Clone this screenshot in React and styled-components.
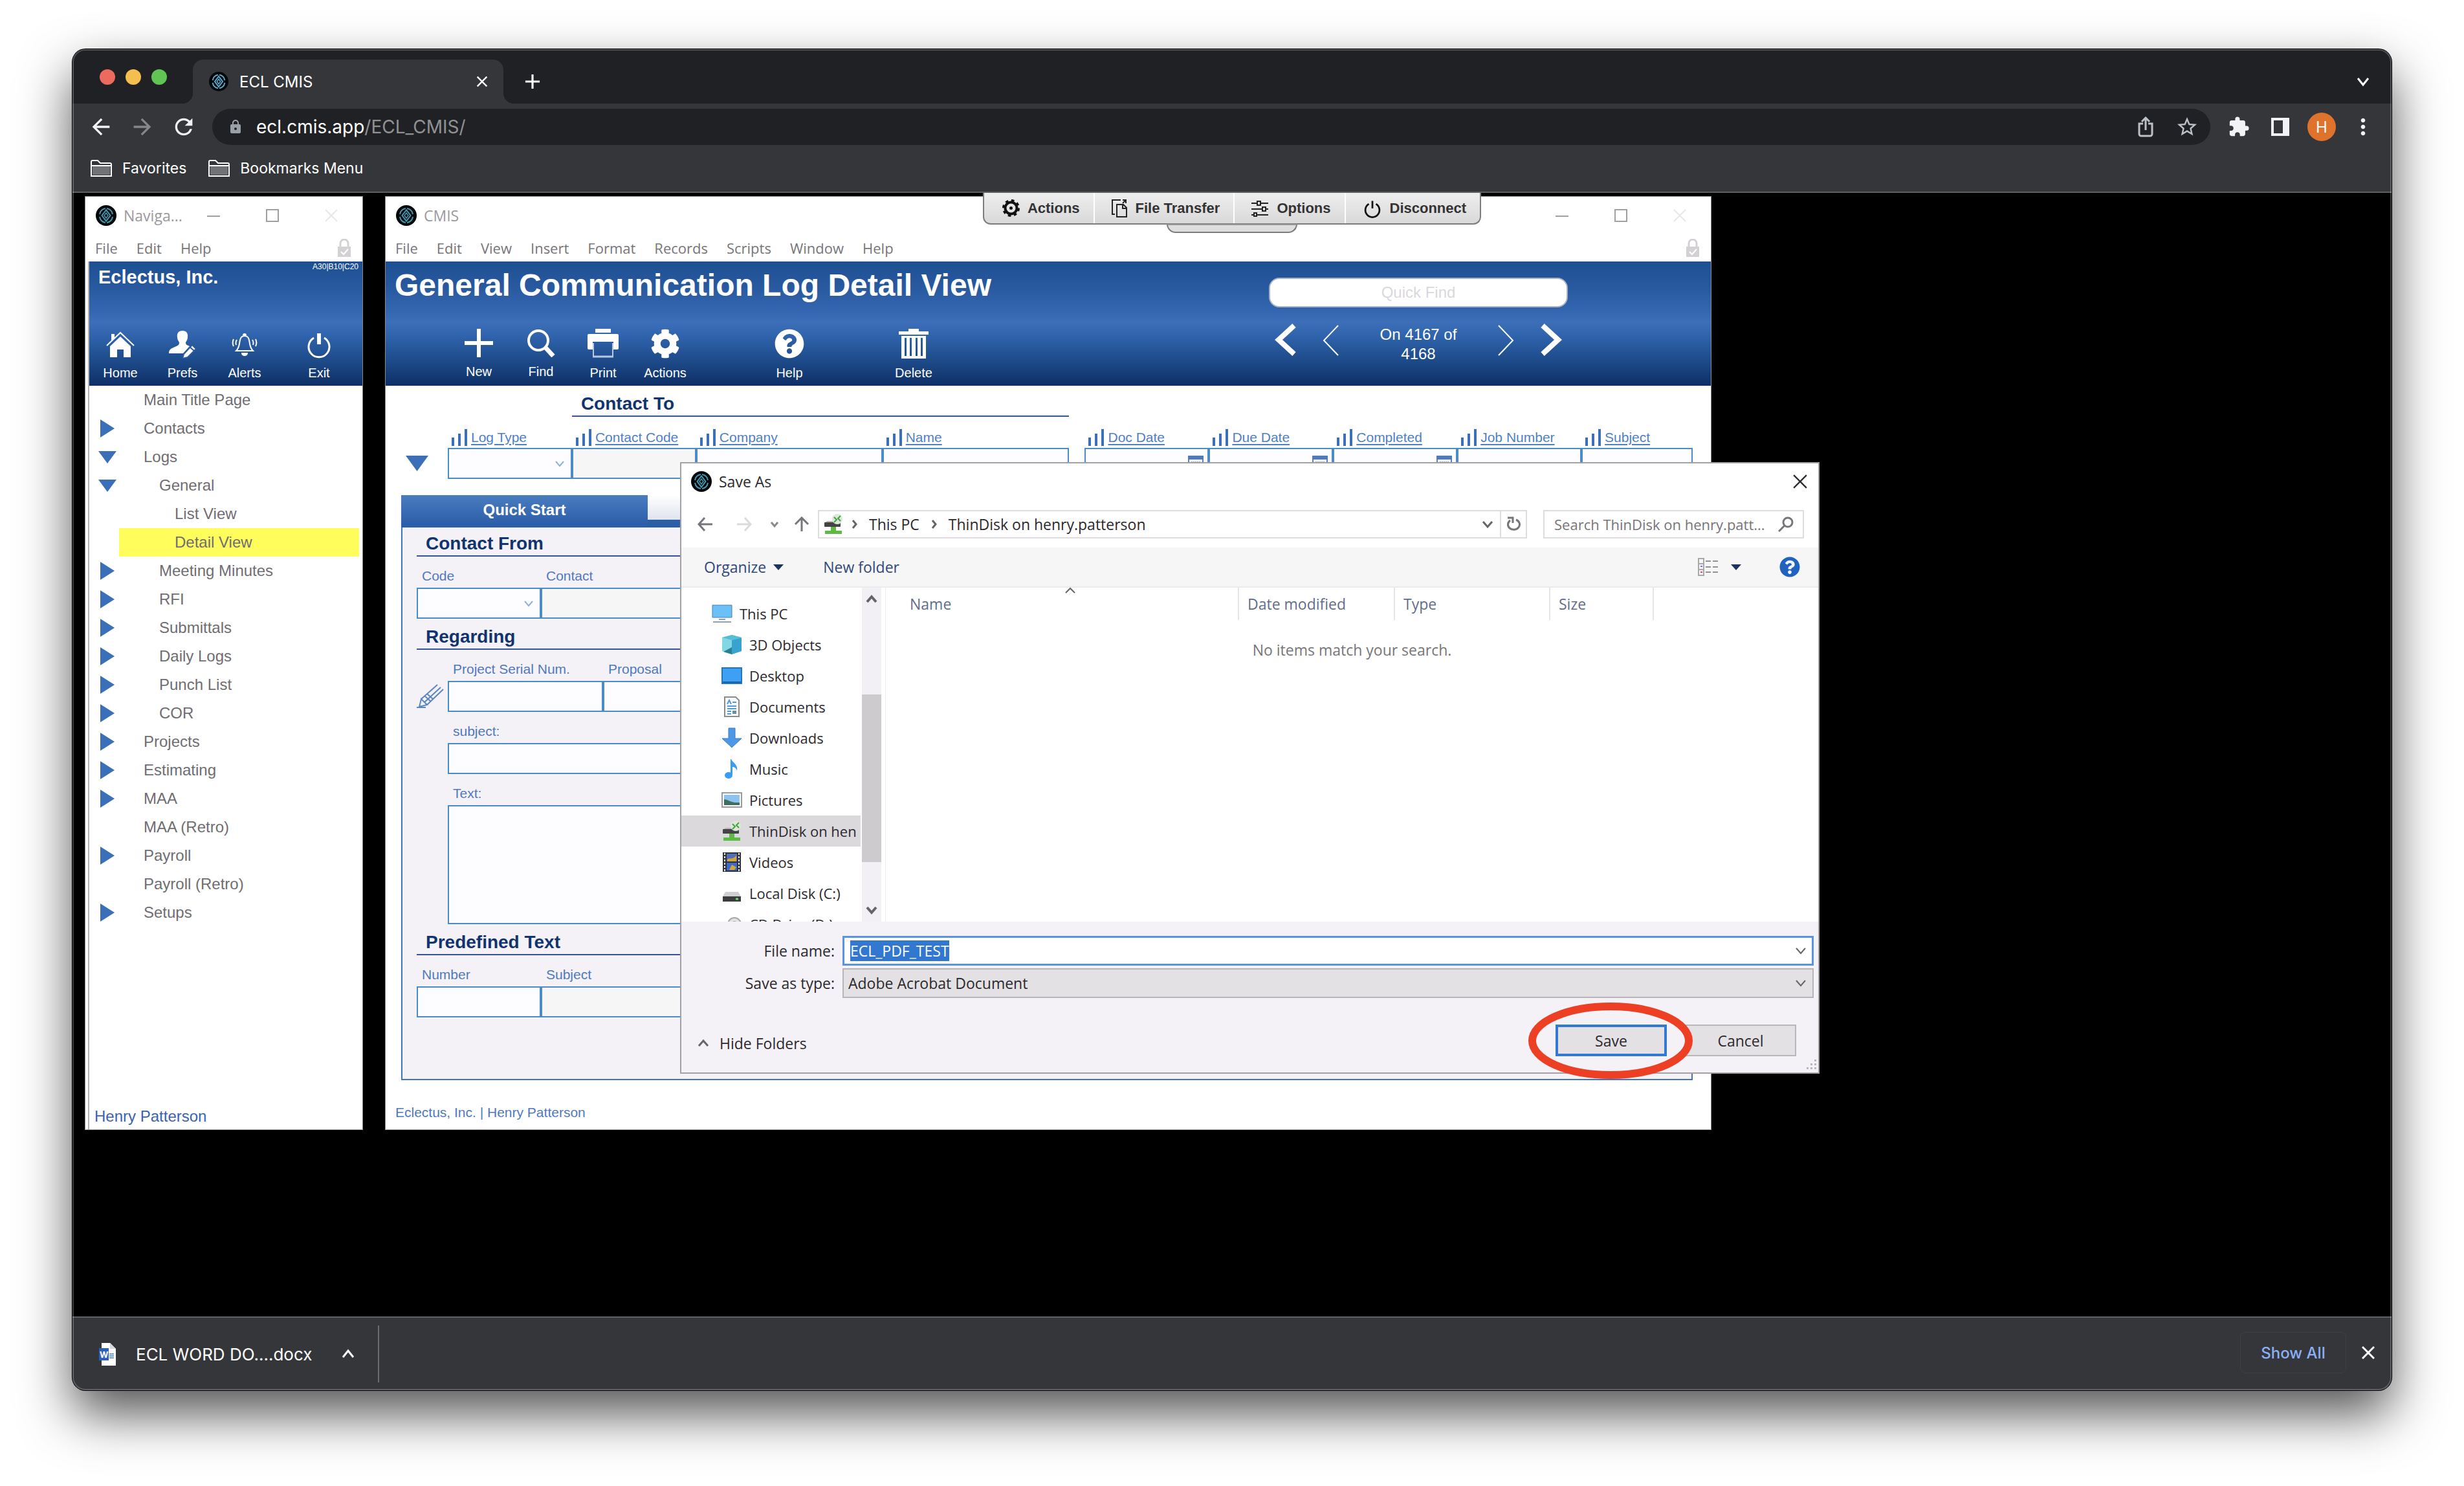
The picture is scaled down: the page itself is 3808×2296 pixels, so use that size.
import React, { useEffect, useRef } from 'react'
import styled, { createGlobalStyle, css } from 'styled-components'
import {
  MdAdd,
  MdArrowBack,
  MdArrowForward,
  MdClose,
  MdExtension,
  MdLock,
  MdMoreVert,
  MdRefresh,
  MdStarBorder,
} from 'react-icons/md'
import { FaCog, FaQuestionCircle } from 'react-icons/fa'

const ui = "Inter, 'Liberation Sans', sans-serif"
const win = "'Open Sans', 'Noto Sans', sans-serif"
const arial = "'Liberation Sans', Arial, sans-serif"

const GlobalStyle = createGlobalStyle`
  * {
    box-sizing: border-box;
  }

  body {
    margin: 0;
    background: #ffffff;
    font-family: ${arial};
  }

  button, input, select, textarea {
    margin: 0;
    padding: 0;
    border: 0;
    border-radius: 0;
    background: none;
    color: inherit;
    font: inherit;
    outline: none;
  }

  a {
    color: inherit;
    text-decoration: none;
  }

  svg {
    display: block;
    flex: none;
  }
`

/* ---------- browser ---------- */

const Page = styled.div`
  min-height: 100vh;
  padding: 76px 112px 148px;
  display: flex;
`

const Browser = styled.div`
  position: relative;
  flex: 1;
  min-width: 0;
  display: flex;
  flex-direction: column;
  border-radius: 20px;
  overflow: hidden;
  background: #35363a;
  color: #ffffff;
  font-family: ${ui};
  box-shadow: 0 0 0 1px #000000, 0 36px 80px rgba(0, 0, 0, 0.68);

  &::after {
    content: '';
    position: absolute;
    inset: 0;
    border: 2px solid rgba(255, 255, 255, 0.22);
    border-radius: 20px;
    pointer-events: none;
  }
`

const TabStrip = styled.div`
  height: 84px;
  padding: 0 35px 0 42px;
  display: flex;
  align-items: flex-end;
  background: #202124;
`

const Lights = styled.div`
  height: 82px;
  display: flex;
  align-items: center;
  gap: 16px;
  margin-right: 40px;
`

const Light = styled.span`
  width: 24px;
  height: 24px;
  border-radius: 50%;
  background: ${(props) => props.$color};
`

const Tab = styled.div`
  position: relative;
  width: 480px;
  height: 68px;
  padding: 0 19px 0 25px;
  display: flex;
  align-items: center;
  gap: 17px;
  border-radius: 16px 16px 0 0;
  background: #35363a;
  font-size: 24px;

  &::before,
  &::after {
    content: '';
    position: absolute;
    bottom: 0;
    width: 16px;
    height: 16px;
  }

  &::before {
    left: -16px;
    background: radial-gradient(circle at 0 0, transparent 16px, #35363a 16px);
  }

  &::after {
    right: -16px;
    background: radial-gradient(circle at 100% 0, transparent 16px, #35363a 16px);
  }
`

const TabTitle = styled.span`
  flex: 1;
`

const StripButton = styled.button`
  height: 68px;
  display: flex;
  align-items: center;
  justify-content: center;
  margin-left: ${(props) => (props.$end ? 'auto' : '26px')};
`

const Toolbar = styled.div`
  height: 72px;
  padding: 0 12px;
  display: flex;
  align-items: center;
`

const ToolButton = styled.button`
  width: 64px;
  height: 56px;
  display: flex;
  align-items: center;
  justify-content: center;
  color: ${(props) => props.$color || '#f1f3f4'};
`

const Omnibox = styled.div`
  flex: 1;
  height: 56px;
  margin: 0 12px;
  padding: 0 4px 0 24px;
  display: flex;
  align-items: center;
  border-radius: 28px;
  background: #202124;
`

const Url = styled.a`
  flex: 1;
  margin-left: 20px;
  font-size: 28px;
  color: #909194;

  span {
    color: #ffffff;
  }
`

const Avatar = styled.span`
  width: 44px;
  height: 44px;
  display: flex;
  align-items: center;
  justify-content: center;
  border-radius: 50%;
  background: #e0732b;
  color: #ffffff;
  font-size: 24px;
`

const Bookmarks = styled.div`
  height: 66px;
  padding: 0 28px 8px;
  display: flex;
  align-items: center;
  gap: 34px;
  border-bottom: 2px solid #5f6064;
`

const Bookmark = styled.a`
  display: flex;
  align-items: center;
  gap: 16px;
  font-size: 23px;
`

const Downloads = styled.div`
  height: 114px;
  padding: 0 26px 0 41px;
  display: flex;
  align-items: center;
  border-top: 2px solid #5f6064;
  font-size: 26px;
`

const DownloadItem = styled.button`
  height: 88px;
  padding-right: 37px;
  display: flex;
  align-items: center;
  gap: 31px;
  border-right: 2px solid #6b6c70;

  svg:last-child {
    margin-left: 16px;
  }
`

const DownloadActions = styled.div`
  margin-left: auto;
  padding-bottom: 4px;
  display: flex;
  align-items: center;
  gap: 24px;
`

const ShowAll = styled.button`
  width: 164px;
  height: 64px;
  border: 1px solid #3f4044;
  border-radius: 8px;
  color: #8ab0f5;
  font-size: 24px;
  font-weight: 500;
`

/* ---------- remote desktop ---------- */

const Desktop = styled.main`
  position: relative;
  flex: 1;
  padding: 5px 19px;
  background: #000000;
`

const Windows = styled.div`
  display: flex;
  align-items: stretch;
  gap: 34px;
`

const SessionBar = styled.div`
  position: absolute;
  top: 0;
  left: 0;
  right: 0;
  z-index: 1;
  display: flex;
  flex-direction: column;
  align-items: center;
`

const SessionButtons = styled.div`
  height: 49px;
  display: flex;
  border: 2px solid #7c7c7c;
  border-top: 0;
  border-radius: 0 0 12px 12px;
  background: linear-gradient(#eeeeee, #d9d9d9);
`

const SessionButton = styled.button`
  padding: 0 21px 0 28px;
  display: flex;
  align-items: center;
  gap: 12px;
  color: #333333;
  font-family: ${arial};
  font-size: 22px;
  font-weight: bold;

  & + & {
    padding-left: 26px;
    border-left: 2px solid #ffffff;
  }
`

const SessionHandle = styled.div`
  width: 202px;
  height: 14px;
  margin-top: -1px;
  border: 2px solid #7c7c7c;
  border-top-color: #999999;
  border-radius: 0 0 14px 14px;
  background: #dedede;
`

const Frame = styled.section`
  position: relative;
  flex: 0 ${(props) => (props.$shrink ? 1 : 0)} ${(props) => props.$width};
  display: flex;
  flex-direction: column;
  border: 1px solid #8a8a8a;
  background: #ffffff;
  font-family: ${arial};
  color: #6f6d72;
`

const TitleBar = styled.header`
  height: 58px;
  padding: 0 38px 0 16px;
  display: flex;
  align-items: center;
  gap: 11px;
  color: #9b999e;
  font-family: ${win};
  font-size: 23px;
`

const Caption = styled.span`
  flex: 1;
  white-space: nowrap;
`

const Controls = styled.div`
  display: flex;
  gap: ${(props) => props.$gap};
  color: #a19fa3;
`

const MenuBar = styled.nav`
  height: 42px;
  padding: 0 18px 0 15px;
  display: flex;
  align-items: center;
  gap: 29px;
  color: #77757a;
  font-family: ${win};
  font-size: 22px;

  svg {
    margin-left: auto;
  }
`

const blueBand = css`
  background: linear-gradient(
    #1e4f92 0%,
    #28599f 20%,
    #3365ae 38%,
    #3c6fb8 49%,
    #2f63ab 60%,
    #1f4d8d 78%,
    #0e2f66 100%
  );
  color: #ffffff;
`

const NavBody = styled.div`
  flex: 1;
  margin-left: 4px;
  display: flex;
  flex-direction: column;
  border-left: 2px solid #b4b2b6;
`

const NavHeader = styled.div`
  ${blueBand}
  height: 192px;
  padding: 2px 0 8px;
  display: flex;
  flex-direction: column;
  justify-content: space-between;
`

const CompanyRow = styled.div`
  padding: 0 6px 0 14px;
  display: flex;
  justify-content: space-between;
  font-size: 12px;
  line-height: 12px;
`

const Company = styled.strong`
  padding-top: 6px;
  font-size: 29px;
  line-height: 32px;
`

const NavActions = styled.div`
  display: grid;
  grid-template-columns: 96px 96px 96px 1fr;
`

const ActionButton = styled.button`
  display: flex;
  flex-direction: column;
  align-items: center;
  gap: 10px;
  grid-column: ${(props) => props.$slot || 'auto'};
  color: #ffffff;
  font-size: 20px;
  line-height: 24px;
`

const Tree = styled.ul`
  flex: 1;
  margin: 0;
  padding: 0 5px 0 0;
  list-style: none;
  font-size: 24px;
`

const TreeRow = styled.li`
  display: flex;
  height: 44px;
  line-height: 44px;
`

const TreeToggle = styled.span`
  width: 46px;
  padding-left: 10px;
  display: flex;
  align-items: center;
  justify-content: center;
`

const TreeLink = styled.a`
  flex: 1;
  padding-left: ${(props) => 38 + props.$level * 24}px;
  background: ${(props) => (props.$active ? '#fffd5c' : 'none')};
`

const NavUser = styled.footer`
  padding: 8px;
  color: #3a62b4;
  font-size: 24px;
  line-height: 24px;
`

/* ---------- CMIS form ---------- */

const FormHeader = styled.div`
  ${blueBand}
  height: 192px;
  padding-right: 221px;
  display: flex;
  justify-content: space-between;
`

const HeaderMain = styled.div`
  padding: 9px 0 8px;
  display: flex;
  flex-direction: column;
  justify-content: space-between;
`

const PageTitle = styled.h1`
  margin: 0;
  padding-left: 14px;
  font-size: 48px;
  line-height: 56px;
  white-space: nowrap;
`

const FormActions = styled.div`
  padding-left: 96px;
  display: grid;
  grid-template-columns: repeat(8, 96px);
`

const HeaderSide = styled.div`
  width: 462px;
  padding-top: 25px;
`

const QuickFind = styled.input`
  width: 100%;
  height: 46px;
  border: 2px solid #a9b2c2;
  border-radius: 16px;
  background: #ffffff;
  color: #333333;
  font-size: 24px;
  text-align: center;

  &::placeholder {
    color: #dad8dc;
    opacity: 1;
  }
`

const RecordNav = styled.div`
  margin-top: 27px;
  padding: 0 13px;
  display: flex;
  align-items: flex-start;
  gap: 42px;
  color: #ffffff;
`

const RecordCount = styled.p`
  flex: 1;
  margin: 0;
  font-size: 24px;
  line-height: 30px;
  text-align: center;
`

const FilterGrid = styled.div`
  padding: 12px 28px 0 0;
  display: grid;
  grid-template-columns: 96px 192fr 192fr 288fr 288fr 25fr 192fr 192fr 192fr 192fr 172fr;
  row-gap: 16px;
`

const SectionTitle = styled.h2`
  margin: 0;
  padding: 0 14px 2px;
  grid-column: ${(props) => props.$columns || 'auto'};
  border-bottom: 2px solid #34558f;
  color: #12346e;
  font-size: 28px;
  line-height: 32px;
`

const FieldCell = styled.div`
  display: flex;
  flex-direction: column;
  min-width: 0;
  grid-column-start: ${(props) => props.$start || 'auto'};
`

const SortLabel = styled.label`
  height: 32px;
  padding-left: 6px;
  display: flex;
  align-items: center;
  gap: 6px;
  color: #4f7fc5;
  font-size: 21px;
  text-decoration: underline;
  text-underline-offset: 3px;
  white-space: nowrap;
`

const FieldLabel = styled.label`
  margin-bottom: 4px;
  padding-left: 8px;
  color: #5079bd;
  font-size: 21px;
  line-height: 28px;
`

const boxed = css`
  width: 100%;
  height: 48px;
  border: 2px solid #4d8bc4;
  background: ${(props) => (props.$muted ? '#f6f6f6' : '#fdfcff')};
  appearance: none;
`

const TextBox = styled.input`
  ${boxed}
`

const TextArea = styled.textarea`
  ${boxed}
  display: block;
  height: 184px;
  resize: none;
`

const Picker = styled.select`
  ${boxed}
  grid-area: 1 / 1;
`

const DateBox = styled.input`
  ${boxed}
  grid-area: 1 / 1;
`

const BoxWithIcon = styled.div`
  display: grid;
  align-items: center;

  svg {
    grid-area: 1 / 1;
    justify-self: end;
    margin-right: ${(props) => props.$inset || '10px'};
    pointer-events: none;
  }
`

const RowToggle = styled.button`
  grid-area: 2 / 1;
  height: 48px;
  align-self: end;
  display: flex;
  align-items: center;
  justify-content: center;
`

const Panel = styled.div`
  margin: 25px 28px 0 24px;
  padding-bottom: 95px;
  border: 2px solid #4673b8;
  border-top: 0;
  background: #f4f2f6;
`

const PanelTabs = styled.div`
  height: 50px;
  margin: 0 -2px;
  display: flex;
  align-items: flex-start;
  background: #2b5ea8;
`

const PanelTab = styled.button`
  height: ${(props) => (props.$active ? 46 : 38)}px;
  flex: ${(props) => (props.$active ? '0 0 381px' : 1)};
  background: ${(props) =>
    props.$active
      ? 'linear-gradient(#4a7cc0, #2b5ea8)'
      : 'linear-gradient(#ffffff, #dfe3ee)'};
  color: #ffffff;
  font-size: 24px;
  font-weight: bold;
`

const PanelSection = styled.section`
  padding: ${(props) => (props.$first ? 9 : 12)}px 22px 0;
`

const FieldRow = styled.div`
  margin-top: 16px;
  padding-left: ${(props) => (props.$indent ? '48px' : 0)};
  display: grid;
  grid-template-columns: ${(props) => props.$columns || '1fr'};
`

const EditMark = styled.button`
  height: 48px;
  align-self: end;
  display: flex;
  align-items: center;
`

const FormFooter = styled.footer`
  padding: 38px 15px 14px;
  color: #5079bd;
  font-size: 21px;
  line-height: 24px;
`

/* ---------- save dialog ---------- */

const Dialog = styled.div`
  position: absolute;
  top: 410px;
  left: 455px;
  width: 1761px;
  border: 2px solid #a3a1a5;
  background: #ffffff;
  color: #2b292e;
  font-family: ${win};
  font-size: 23px;
`

const DialogTitle = styled.header`
  height: 56px;
  padding: 0 17px 0 15px;
  display: flex;
  align-items: center;
  gap: 11px;
`

const AddressRow = styled.div`
  height: 74px;
  padding: 16px 22px 14px 7px;
  display: flex;
`

const ArrowButton = styled.button`
  width: ${(props) => props.$width};
  display: flex;
  align-items: center;
  justify-content: center;
`

const AddressBox = styled.div`
  flex: 1;
  padding-left: 6px;
  display: flex;
  align-items: center;
  border: 2px solid #dedcdf;
`

const Crumbs = styled.div`
  flex: 1;
  padding-left: 12px;
  display: flex;
  align-items: center;
  gap: 18px;
`

const RefreshButton = styled.button`
  width: 40px;
  height: 100%;
  margin-left: 11px;
  display: flex;
  align-items: center;
  justify-content: center;
  border-left: 2px solid #dedcdf;
`

const SearchBox = styled.label`
  width: 403px;
  margin-left: 25px;
  padding: 0 14px 0 15px;
  display: flex;
  align-items: center;
  border: 2px solid #dedcdf;
  font-size: 22px;

  input {
    flex: 1;
    min-width: 0;
  }

  input::placeholder {
    color: #767479;
    opacity: 1;
  }
`

const CommandBar = styled.div`
  height: 62px;
  padding: 0 28px 0 35px;
  display: flex;
  align-items: center;
  border-bottom: 2px solid #ebebec;
  background: #f6f6f6;
  color: #32487c;
`

const Command = styled.button`
  margin-right: ${(props) => props.$space || 0};
  margin-left: ${(props) => (props.$push ? 'auto' : 0)};
  display: flex;
  align-items: center;
  gap: ${(props) => props.$gap || '11px'};
`

const DialogBody = styled.div`
  height: 516px;
  display: flex;
`

const Places = styled.ul`
  width: 277px;
  margin: 0;
  padding: 16px 0 0;
  list-style: none;
  overflow: hidden;
  font-size: 22px;
`

const Place = styled.li`
  height: 48px;
  padding-left: ${(props) => (props.$root ? 47 : 62)}px;
  background: ${(props) => (props.$active ? '#dbd9dc' : 'none')};

  a {
    height: 48px;
    display: flex;
    align-items: center;
    gap: 11px;
    white-space: nowrap;
  }
`

const ScrollTrack = styled.div`
  width: 30px;
  margin: 0 6px 0 2px;
  display: flex;
  flex-direction: column;
  background: #f2f0f4;
`

const ScrollButton = styled.button`
  height: 36px;
  display: flex;
  align-items: center;
  justify-content: center;
`

const ScrollGap = styled.div`
  flex: ${(props) => props.$grow};
`

const ScrollThumb = styled.div`
  flex: 258;
  background: #cdcbce;
`

const FileArea = styled.div`
  flex: 1;
  border-left: 1px solid #efedf1;
`

const FileTable = styled.table`
  width: 100%;
  border-collapse: collapse;
  table-layout: fixed;

  td {
    padding: 30px 0 0;
    color: #77757a;
    line-height: 32px;
    text-align: center;
  }
`

const ColumnHead = styled.th`
  position: relative;
  width: ${(props) => props.$width || 'auto'};
  height: 50px;
  padding: 0 0 0 ${(props) => (props.$first ? 37 : 13)}px;
  border-right: ${(props) => (props.$last ? 0 : '2px solid #e6e4e8')};
  color: #5f6d8c;
  font-weight: normal;
  text-align: left;

  svg {
    position: absolute;
    top: 0;
    left: 51%;
  }
`

const DialogFooter = styled.footer`
  padding: 22px 7px 25px 0;
  background: #f4f2f6;
`

const NameGrid = styled.div`
  display: grid;
  grid-template-columns: 237px 1fr;
  column-gap: 12px;
  row-gap: 4px;
  align-items: center;

  label {
    text-align: right;
  }
`

const NameBox = styled.div`
  height: 46px;
  padding: 0 9px;
  display: flex;
  align-items: center;
  border: 3px solid #5a93df;
  background: #ffffff;
`

const NameInput = styled.input`
  flex: 1;

  &::selection {
    background: #3277d0;
    color: #ffffff;
  }
`

const TypeBox = styled(BoxWithIcon)`
  select {
    grid-area: 1 / 1;
    height: 46px;
    padding-left: 7px;
    border: 2px solid #b7b5b9;
    background: #e3e1e4;
    appearance: none;
  }
`

const DialogActions = styled.div`
  margin-top: 41px;
  padding: 0 27px 0 26px;
  display: flex;
  align-items: center;
  gap: 28px;
`

const HideFolders = styled.button`
  margin-right: auto;
  padding-top: 8px;
  display: flex;
  align-items: center;
  gap: 17px;
`

const DialogButton = styled.button`
  position: relative;
  width: 172px;
  height: 49px;
  border: ${(props) => (props.$primary ? '4px solid #3279d2' : '2px solid #b9b7bb')};
  background: #e3e1e4;
`

const Ring = styled.svg`
  position: absolute;
  z-index: 1;
  top: -39px;
  left: -47px;
  pointer-events: none;
`

const Grip = styled.svg`
  position: absolute;
  right: 2px;
  bottom: 4px;
`

/* ---------- drawings ---------- */

const Logo = ({ size = 32, color = '#4796ad' }) => (
  <svg width={size} height={size} viewBox="0 0 32 32" fill="none">
    <circle cx="16" cy="16" r="16" fill="#05080a" />
    <path d="M15 5a11 11 0 0 0-9 9M17 5a11 11 0 0 1 9 9M15 27a11 11 0 0 1-9-9M17 27a11 11 0 0 0 9-9" stroke={color} strokeWidth="2" />
    <path d="M16 7.500l-6.500 8.500 6.500 8.500 6.500-8.500z" stroke={color} strokeWidth="2" />
    <path d="M16 12l-3 4 3 4 3-4z" stroke={color} strokeWidth="1.500" />
  </svg>
)

const Chevron = ({ dir = 'down', w = 16, h = 10, stroke = 3, color = '#666468' }) => {
  const paths = {
    down: `M1 1L${w / 2} ${h - 1}L${w - 1} 1`,
    up: `M1 ${h - 1}L${w / 2} 1L${w - 1} ${h - 1}`,
    left: `M${w - 2} 1L2 ${h / 2}L${w - 2} ${h - 1}`,
    right: `M2 1L${w - 2} ${h / 2}L2 ${h - 1}`,
  }
  return (
    <svg width={w} height={h} viewBox={`0 0 ${w} ${h}`} fill="none" overflow="visible">
      <path d={paths[dir]} stroke={color} strokeWidth={stroke} />
    </svg>
  )
}

const Triangle = ({ dir = 'down', w, h, color = '#3b6fb8' }) => (
  <svg width={w} height={h} viewBox={`0 0 ${w} ${h}`} fill={color}>
    <path d={dir === 'down' ? `M0 0H${w}L${w / 2} ${h}z` : `M0 0L${w} ${h / 2}L0 ${h}z`} />
  </svg>
)

const Cross = ({ size = 20, stroke = 2, color = 'currentColor' }) => (
  <svg width={size} height={size} viewBox="0 0 20 20" stroke={color} strokeWidth={stroke}>
    <path d="M1 1l18 18M19 1L1 19" />
  </svg>
)

const WindowControls = ({ gap }) => (
  <Controls $gap={gap}>
    <button aria-label="Minimize">
      <svg width="20" height="20" stroke="currentColor" strokeWidth="2">
        <path d="M0 11h20" />
      </svg>
    </button>
    <button aria-label="Maximize">
      <svg width="20" height="20" fill="none" stroke="currentColor" strokeWidth="2">
        <path d="M1 1h18v18H1z" />
      </svg>
    </button>
    <button aria-label="Close">
      <Cross color="#eae6ec" />
    </button>
  </Controls>
)

const CheckedLock = () => (
  <svg width="20" height="28" viewBox="0 0 20 28" fill="none">
    <path d="M4 14V7a6 6 0 0 1 12 0v7" stroke="#d3d1d4" strokeWidth="3" />
    <path d="M0 12h20v16H0z" fill="#d3d1d4" />
    <path d="M5 20l4 4 7-8" stroke="#ffffff" strokeWidth="2" />
  </svg>
)

const Folder = () => (
  <svg width="33" height="26" viewBox="0 0 33 26" fill="none" stroke="#ffffff" strokeWidth="2">
    <path d="M3 9h27v14H3z" fill="#717276" stroke="none" />
    <path d="M1 25V3c0-1 1-2 2-2h8l4 4h15c1 0 2 1 2 2v18z" />
    <path d="M1 9h31" />
  </svg>
)

const ShareIcon = () => (
  <svg width="24" height="32" viewBox="0 0 24 32" fill="none" stroke="#bdc1c6" strokeWidth="3">
    <path d="M8 11H2v16a3 3 0 0 0 3 3h14a3 3 0 0 0 3-3V11h-6M12 21V3M6 8l6-6 6 6" />
  </svg>
)

const SidePanelIcon = () => (
  <svg width="28" height="28" fill="#f1f3f4">
    <path fillRule="evenodd" d="M0 0h28v28H0zM4 4v20h14V4z" />
  </svg>
)

const WordFile = () => (
  <svg width="26" height="36" viewBox="0 0 26 36">
    <path d="M4 1h13l9 9v26H4z" fill="#ffffff" />
    <path d="M17 1l9 9h-9z" fill="#d5d8de" />
    <path d="M16 18h7M16 21h7M16 24h7" stroke="#3d7fd0" strokeWidth="1.500" />
    <rect y="9" width="15" height="19" fill="#2b5fb8" />
    <text x="1" y="24" fontSize="13" fontWeight="bold" fill="#ffffff">W</text>
  </svg>
)

const HomeIcon = () => (
  <svg width="44" height="44" viewBox="0 0 44 44" fill="#ffffff">
    <path d="M8 6h5v6l-5 5z" />
    <path d="M1 24L22 4l21 20" fill="none" stroke="#ffffff" strokeWidth="2" />
    <path d="M22 10L6 25v17h11V30h10v12h11V25z" />
  </svg>
)

const PrefsIcon = () => (
  <svg width="44" height="44" viewBox="0 0 44 44" fill="#ffffff">
    <path d="M22 1c-6 0-9 4-8 10 0 4 2 6 3 8 0 5-3 5-9 8-5 2-7 4-7 9h22l10-11c-4-2-6-2-6-6 1-2 3-4 3-8 1-6-2-10-8-10z" />
    <path d="M24 37l13-14 6 6-13 13-8 2z" stroke="#2a5ba2" strokeWidth="2" />
    <path d="M33 26l7 6" stroke="#2a5ba2" strokeWidth="2" />
  </svg>
)

const BellIcon = () => (
  <svg width="40" height="44" viewBox="0 0 40 44" fill="none" stroke="#ffffff" strokeWidth="2">
    <path d="M20 9c-6 0-7 5-8 12-1 6-2 8-5 11h26c-3-3-4-5-5-11-1-7-2-12-8-12z" />
    <path d="M16 36h8a4 3 0 0 1-8 0zM18 8a2 2 0 0 1 4 0" fill="#ffffff" />
    <path d="M8 15c-2 3-2 5-1 8M3 14c-2 4-2 7 0 11M32 15c2 3 2 5 1 8M37 14c2 4 2 7 0 11" />
  </svg>
)

const PowerIcon = ({ size = 44, stroke = 3, color = '#ffffff', bar = 6 }) => (
  <svg width={size} height={size} viewBox="0 0 44 44" fill="none" stroke={color}>
    <path d="M14 12a16 16 0 1 0 16 0" strokeWidth={stroke} />
    <path d="M22 5v17" strokeWidth={bar} />
  </svg>
)

const PlusIcon = () => (
  <svg width="44" height="44" fill="none" stroke="#ffffff" strokeWidth="6">
    <path d="M22 0v44M0 22h44" />
  </svg>
)

const FindIcon = () => (
  <svg width="44" height="44" fill="none" stroke="#ffffff">
    <circle cx="18" cy="18" r="15" strokeWidth="4" />
    <path d="M29 29l12 13" strokeWidth="7" />
  </svg>
)

const PrintIcon = () => (
  <svg width="48" height="46" viewBox="0 0 48 46">
    <path d="M12 0h24v6H12zM2 8h44a2 2 0 0 1 2 2v20a2 2 0 0 1-2 2h-6V20H8v12H2a2 2 0 0 1-2-2V10a2 2 0 0 1 2-2z" fill="#ffffff" />
    <path d="M9 22v21h30V22" fill="none" stroke="#b9c8e2" strokeWidth="2" />
    <path d="M8 43h32" stroke="#b9c8e2" strokeWidth="3" />
  </svg>
)

const TrashIcon = () => (
  <svg width="46" height="46" viewBox="0 0 46 46" fill="#ffffff">
    <path d="M15 0h16v4h15v5H0V4h15z" />
    <path d="M4 11h38v35H4zM9 14v28h3V14zM17 14v28h3V14zM26 14v28h3V14zM34 14v28h3V14z" fillRule="evenodd" />
  </svg>
)

const SortBars = () => (
  <svg width="24" height="26" stroke="#3b6fb8" strokeWidth="4">
    <path d="M2 26V13M12 26V7M22 26V0" />
  </svg>
)

const Calendar = () => (
  <svg width="24" height="24" viewBox="0 0 24 24">
    <path d="M1 1h22v22H1z" fill="#f4f7fc" stroke="#5a83bd" strokeWidth="2" />
    <path d="M0 0h24v6H0z" fill="#4d7ab8" />
    <path d="M5 10h14M5 14h14M5 18h14" stroke="#9db7dc" strokeWidth="2" strokeDasharray="2 1" />
  </svg>
)

const PencilIcon = () => (
  <svg width="42" height="40" viewBox="0 0 42 40" fill="none" stroke="#5a86c2" strokeWidth="2">
    <path d="M4 36l3-12 9 9zM7 24L32 2M12 29L37 6M16 33L41 9M12 19l10 9M16 16l9 8M0 37h14" />
  </svg>
)

const ArrowLine = ({ dir, color = '#77757a' }) => {
  const paths = {
    left: 'M23 12H2M11 2L2 12l9 10',
    right: 'M1 12h21M13 2l9 10-9 10',
    up: 'M12 23V2M2 12L12 2l10 10',
  }
  return (
    <svg width="24" height="24" fill="none" stroke={color} strokeWidth="3">
      <path d={paths[dir]} />
    </svg>
  )
}

const Reload = () => (
  <svg width="22" height="24" viewBox="0 0 22 24" fill="none" stroke="#77757a" strokeWidth="3">
    <path d="M15 5a9 8 0 1 1-9 1M2 2h8v8" />
  </svg>
)

const SearchLine = () => (
  <svg width="24" height="24" fill="none" stroke="#77757a" strokeWidth="3">
    <circle cx="15" cy="9" r="7" />
    <path d="M10 14l-9 9" />
  </svg>
)

const ViewIcon = () => (
  <svg width="32" height="28" fill="none" strokeWidth="2">
    <path d="M1 1h8v8H1zM1 9h8v9H1zM1 18h8v9H1z" stroke="#a9a7ab" />
    <path d="M12 5h8M23 5h8M12 14h8M23 14h8M12 22h8M23 22h8" stroke="#929095" />
    <path d="M4 13h3" stroke="#5b7cff" />
    <path d="M4 22h3" stroke="#e0503c" />
  </svg>
)

const ThinDisk = () => (
  <svg width="32" height="32" viewBox="0 0 32 32">
    <path d="M3 14l3-3h20v3z" fill="#b9b9b9" />
    <rect x="2" y="13" width="25" height="7" rx="1" fill="#444446" />
    <circle cx="22" cy="8" r="8" fill="#dfe4dd" />
    <path d="M17 5l4 4-4 4M27 3l-4 4 4 4" fill="none" stroke="#3aa835" strokeWidth="2" />
    <path d="M12 20h8v6h9v5H3v-5h9z" fill="#5dbb45" />
  </svg>
)

const placeDrawings = {
  pc: (
    <>
      <path d="M1 3h30v19H1z" fill="#6cc0f8" stroke="#4a7ea8" />
      <path d="M11 25h10M2 29h28" stroke="#8ea3b5" strokeWidth="2" />
    </>
  ),
  cube: (
    <>
      <path d="M16 1l15 4v21l-15 5-15-5V5z" fill="#7fd8e4" />
      <path d="M16 9l15-4v21l-15 5z" fill="#39a3cf" />
      <path d="M1 5l15-4 15 4-15 4z" fill="#56bdd4" />
      <path d="M3 27l13-7v11z" fill="#2a7f96" />
    </>
  ),
  desktop: (
    <>
      <path d="M1 4h30v24H1z" fill="#3ea0f5" stroke="#1f77c4" strokeWidth="2" />
      <path d="M2 26h28" stroke="#1561a5" strokeWidth="2" />
    </>
  ),
  document: (
    <>
      <path d="M5 1h17l5 5v25H5z" fill="#fcfcfc" stroke="#8b8b8b" strokeWidth="2" />
      <path d="M9 12l3-6 3 6M17 9h6M9 15h14M9 19h14M9 23h6M9 27h6" fill="none" stroke="#4b9ae0" strokeWidth="2" />
      <path d="M17 22h6v5h-6z" fill="#6d8f9b" />
    </>
  ),
  download: <path d="M11 1h10v16h10L16 31 1 17h10z" fill="#4c97e6" stroke="#3a7cc6" />,
  music: (
    <>
      <path d="M15 1c2 5 11 8 9 18-1-4-4-6-7-6v12h-3V1z" fill="#3c9cf2" />
      <ellipse cx="11" cy="26" rx="6" ry="5" fill="#3c9cf2" />
    </>
  ),
  picture: (
    <>
      <path d="M1 5h30v22H1z" fill="#ffffff" stroke="#9a9a9a" strokeWidth="2" />
      <path d="M4 8h24v16H4z" fill="#8cc4f0" />
      <path d="M4 15c6 0 10 6 24 5v4H4z" fill="#3f6f63" />
    </>
  ),
  video: (
    <>
      <path d="M2 1h28v30H2z" fill="#303038" />
      <path d="M8 3h16v12H8z" fill="#4f6fb8" />
      <path d="M8 17h16v12H8z" fill="#3a6bd0" />
      <path d="M9 12c4-4 6 2 14-6v9H9zM16 20l7 4-3 4h-8z" fill="#d5a437" />
      <path d="M5 2v28M27 2v28" stroke="#e5e5e5" strokeWidth="2" strokeDasharray="3 2" />
    </>
  ),
  disk: (
    <>
      <path d="M6 14h20l4 7H2z" fill="#cfcfd1" />
      <path d="M2 21h28v8H2z" fill="#3c3c3f" />
      <path d="M22 25h4" stroke="#55e05a" strokeWidth="3" />
    </>
  ),
  cd: (
    <>
      <circle cx="20" cy="16" r="10" fill="#e3e3e5" stroke="#a9a9ac" strokeWidth="2" />
      <circle cx="20" cy="16" r="4" fill="#ffffff" stroke="#a9a9ac" strokeWidth="2" />
    </>
  ),
}

const PlaceIcon = ({ kind }) =>
  kind === 'thin' ? (
    <ThinDisk />
  ) : (
    <svg width="32" height="32" viewBox="0 0 32 32">
      {placeDrawings[kind]}
    </svg>
  )

const GearOutline = () => (
  <svg width="27" height="27" viewBox="0 0 27 27" fill="none" stroke="#111111">
    <circle cx="13.500" cy="13.500" r="9" strokeWidth="4" />
    <circle cx="13.500" cy="13.500" r="11.500" strokeWidth="4" strokeDasharray="4.500 4.530" />
    <circle cx="13.500" cy="13.500" r="2.500" fill="#111111" stroke="none" />
  </svg>
)

const TransferIcon = () => (
  <svg width="25" height="28" viewBox="0 0 25 28" fill="none" stroke="#222222" strokeWidth="2">
    <path d="M14 1H1v22h4M8 8h10l5 5v14H8zM17 8v6h6M17 1h5v5M22 1l-5 5" />
  </svg>
)

const OptionsIcon = () => (
  <svg width="27" height="26" viewBox="0 0 27 26" fill="none" stroke="#222222" strokeWidth="2">
    <path d="M0 5h9M14 5h12M0 14h17M22 14h4M0 23h4M9 23h17M9 2h5v6H9zM17 11h5v6h-5zM4 20h4v5H4z" />
  </svg>
)

/* ---------- data ---------- */

const tree = [
  { label: 'Main Title Page' },
  { label: 'Contacts', toggle: 'right' },
  { label: 'Logs', toggle: 'down' },
  { label: 'General', toggle: 'down', level: 1 },
  { label: 'List View', level: 2 },
  { label: 'Detail View', level: 2, active: true },
  { label: 'Meeting Minutes', toggle: 'right', level: 1 },
  { label: 'RFI', toggle: 'right', level: 1 },
  { label: 'Submittals', toggle: 'right', level: 1 },
  { label: 'Daily Logs', toggle: 'right', level: 1 },
  { label: 'Punch List', toggle: 'right', level: 1 },
  { label: 'COR', toggle: 'right', level: 1 },
  { label: 'Projects', toggle: 'right' },
  { label: 'Estimating', toggle: 'right' },
  { label: 'MAA', toggle: 'right' },
  { label: 'MAA (Retro)' },
  { label: 'Payroll', toggle: 'right' },
  { label: 'Payroll (Retro)' },
  { label: 'Setups', toggle: 'right' },
]

const filters = [
  { label: 'Log Type', kind: 'select', start: 2 },
  { label: 'Contact Code', muted: true },
  { label: 'Company' },
  { label: 'Name' },
  { label: 'Doc Date', kind: 'date', start: 7 },
  { label: 'Due Date', kind: 'date' },
  { label: 'Completed', kind: 'date' },
  { label: 'Job Number' },
  { label: 'Subject' },
]

const places = [
  { label: 'This PC', kind: 'pc', root: true },
  { label: '3D Objects', kind: 'cube' },
  { label: 'Desktop', kind: 'desktop' },
  { label: 'Documents', kind: 'document' },
  { label: 'Downloads', kind: 'download' },
  { label: 'Music', kind: 'music' },
  { label: 'Pictures', kind: 'picture' },
  { label: 'ThinDisk on hen', kind: 'thin', active: true },
  { label: 'Videos', kind: 'video' },
  { label: 'Local Disk (C:)', kind: 'disk' },
  { label: 'CD Drive (D:)', kind: 'cd' },
]

/* ---------- parts ---------- */

function Navigation() {
  return (
    <Frame $width="430px">
      <TitleBar>
        <Logo />
        <Caption>Naviga...</Caption>
        <WindowControls gap="71px" />
      </TitleBar>
      <MenuBar>
        <button>File</button>
        <button>Edit</button>
        <button>Help</button>
        <CheckedLock />
      </MenuBar>
      <NavBody>
        <NavHeader>
          <CompanyRow>
            <Company>Eclectus, Inc.</Company>
            A30|B10|C20
          </CompanyRow>
          <NavActions>
            <ActionButton>
              <HomeIcon />
              Home
            </ActionButton>
            <ActionButton>
              <PrefsIcon />
              Prefs
            </ActionButton>
            <ActionButton>
              <BellIcon />
              Alerts
            </ActionButton>
            <ActionButton>
              <PowerIcon />
              Exit
            </ActionButton>
          </NavActions>
        </NavHeader>
        <Tree>
          {tree.map((item) => (
            <TreeRow key={item.label}>
              <TreeToggle>
                {item.toggle === 'right' && <Triangle dir="right" w={22} h={28} />}
                {item.toggle === 'down' && <Triangle w={28} h={19} />}
              </TreeToggle>
              <TreeLink href="#" $level={item.level || 0} $active={item.active}>
                {item.label}
              </TreeLink>
            </TreeRow>
          ))}
        </Tree>
        <NavUser>Henry Patterson</NavUser>
      </NavBody>
    </Frame>
  )
}

function FilterField({ label, kind, muted, start }) {
  const id = label.toLowerCase().replace(' ', '-')
  return (
    <FieldCell $start={start}>
      <SortLabel htmlFor={id}>
        <SortBars />
        {label}
      </SortLabel>
      {kind === 'select' && (
        <BoxWithIcon $inset="12px">
          <Picker id={id} />
          <Chevron w={14} h={9} stroke={2} color="#8fb0da" />
        </BoxWithIcon>
      )}
      {kind === 'date' && (
        <BoxWithIcon $inset="8px">
          <DateBox id={id} />
          <Calendar />
        </BoxWithIcon>
      )}
      {!kind && <TextBox id={id} $muted={muted} />}
    </FieldCell>
  )
}

function Field({ id, label, muted }) {
  return (
    <FieldCell>
      <FieldLabel htmlFor={id}>{label}</FieldLabel>
      <TextBox id={id} $muted={muted} />
    </FieldCell>
  )
}

function SaveDialog() {
  const nameRef = useRef(null)

  useEffect(() => {
    nameRef.current.focus({ preventScroll: true })
    nameRef.current.select()
  }, [])

  return (
    <Dialog role="dialog" aria-label="Save As">
      <DialogTitle>
        <Logo />
        <Caption>Save As</Caption>
        <button aria-label="Close">
          <Cross size={22} />
        </button>
      </DialogTitle>
      <AddressRow>
        <ArrowButton $width="60px" aria-label="Back">
          <ArrowLine dir="left" />
        </ArrowButton>
        <ArrowButton $width="60px" aria-label="Forward">
          <ArrowLine dir="right" color="#dcdadd" />
        </ArrowButton>
        <ArrowButton $width="34px" aria-label="Recent">
          <Chevron w={12} h={8} color="#8a888c" />
        </ArrowButton>
        <ArrowButton $width="50px" aria-label="Up">
          <ArrowLine dir="up" />
        </ArrowButton>
        <AddressBox>
          <ThinDisk />
          <Crumbs>
            <Chevron dir="right" w={9} h={14} />
            <a href="#">This PC</a>
            <Chevron dir="right" w={9} h={14} />
            <a href="#">ThinDisk on henry.patterson</a>
          </Crumbs>
          <button aria-label="Show addresses">
            <Chevron />
          </button>
          <RefreshButton aria-label="Refresh">
            <Reload />
          </RefreshButton>
        </AddressBox>
        <SearchBox>
          <input aria-label="Search" placeholder="Search ThinDisk on henry.patt..." />
          <SearchLine />
        </SearchBox>
      </AddressRow>
      <CommandBar>
        <Command $space="61px">
          Organize
          <Triangle w={16} h={9} color="#1c335e" />
        </Command>
        <Command>New folder</Command>
        <Command $push $space="59px" $gap="19px" aria-label="Change view">
          <ViewIcon />
          <Triangle w={16} h={9} color="#1c335e" />
        </Command>
        <Command aria-label="Help">
          <FaQuestionCircle size={32} color="#1f62c0" />
        </Command>
      </CommandBar>
      <DialogBody>
        <Places>
          {places.map((place) => (
            <Place key={place.label} $root={place.root} $active={place.active}>
              <a href="#">
                <PlaceIcon kind={place.kind} />
                {place.label}
              </a>
            </Place>
          ))}
        </Places>
        <ScrollTrack>
          <ScrollButton aria-label="Scroll up">
            <Chevron dir="up" stroke={4} />
          </ScrollButton>
          <ScrollGap $grow={128} />
          <ScrollThumb />
          <ScrollGap $grow={56} />
          <ScrollButton aria-label="Scroll down">
            <Chevron stroke={4} />
          </ScrollButton>
        </ScrollTrack>
        <FileArea>
          <FileTable>
            <thead>
              <tr>
                <ColumnHead $width="545px" $first>
                  Name
                  <Chevron dir="up" w={16} h={9} stroke={2} />
                </ColumnHead>
                <ColumnHead $width="241px">Date modified</ColumnHead>
                <ColumnHead $width="240px">Type</ColumnHead>
                <ColumnHead $width="160px">Size</ColumnHead>
                <ColumnHead $last />
              </tr>
            </thead>
            <tbody>
              <tr>
                <td colSpan={5}>No items match your search.</td>
              </tr>
            </tbody>
          </FileTable>
        </FileArea>
      </DialogBody>
      <DialogFooter>
        <NameGrid>
          <label htmlFor="file-name">File name:</label>
          <NameBox>
            <NameInput id="file-name" ref={nameRef} defaultValue="ECL_PDF_TEST" />
            <Chevron stroke={2} />
          </NameBox>
          <label htmlFor="file-type">Save as type:</label>
          <TypeBox $inset="12px">
            <select id="file-type">
              <option>Adobe Acrobat Document</option>
            </select>
            <Chevron stroke={2} />
          </TypeBox>
        </NameGrid>
        <DialogActions>
          <HideFolders>
            <Chevron dir="up" />
            Hide Folders
          </HideFolders>
          <DialogButton $primary>
            Save
            <Ring width="256" height="120" viewBox="0 0 256 120">
              <ellipse cx="128" cy="60" rx="121" ry="53" fill="none" stroke="#ec3f24" strokeWidth="12" />
            </Ring>
          </DialogButton>
          <DialogButton>Cancel</DialogButton>
        </DialogActions>
      </DialogFooter>
      <Grip width="16" height="16" fill="#b9b7bb">
        <path d="M12 0h3v3h-3zM6 6h3v3H6zM12 6h3v3h-3zM0 12h3v3H0zM6 12h3v3H6zM12 12h3v3h-3z" />
      </Grip>
    </Dialog>
  )
}

function Cmis() {
  return (
    <Frame $width="2050px" $shrink>
      <TitleBar>
        <Logo />
        <Caption>CMIS</Caption>
        <WindowControls gap="71px" />
      </TitleBar>
      <MenuBar>
        {['File', 'Edit', 'View', 'Insert', 'Format', 'Records', 'Scripts', 'Window', 'Help'].map((name) => (
          <button key={name}>{name}</button>
        ))}
        <CheckedLock />
      </MenuBar>
      <FormHeader>
        <HeaderMain>
          <PageTitle>General Communication Log Detail View</PageTitle>
          <FormActions>
            <ActionButton $slot={1}>
              <PlusIcon />
              New
            </ActionButton>
            <ActionButton $slot={2}>
              <FindIcon />
              Find
            </ActionButton>
            <ActionButton $slot={3}>
              <PrintIcon />
              Print
            </ActionButton>
            <ActionButton $slot={4}>
              <FaCog size={46} />
              Actions
            </ActionButton>
            <ActionButton $slot={6}>
              <FaQuestionCircle size={46} />
              Help
            </ActionButton>
            <ActionButton $slot={8}>
              <TrashIcon />
              Delete
            </ActionButton>
          </FormActions>
        </HeaderMain>
        <HeaderSide>
          <QuickFind aria-label="Quick Find" placeholder="Quick Find" />
          <RecordNav>
            <button aria-label="First record">
              <Chevron dir="left" w={28} h={46} stroke={8} color="#ffffff" />
            </button>
            <button aria-label="Previous record">
              <Chevron dir="left" w={26} h={48} stroke={2} color="#ffffff" />
            </button>
            <RecordCount>On 4167 of 4168</RecordCount>
            <button aria-label="Next record">
              <Chevron dir="right" w={26} h={48} stroke={2} color="#ffffff" />
            </button>
            <button aria-label="Last record">
              <Chevron dir="right" w={28} h={46} stroke={8} color="#ffffff" />
            </button>
          </RecordNav>
        </HeaderSide>
      </FormHeader>
      <FilterGrid>
        <SectionTitle $columns="3 / 6">Contact To</SectionTitle>
        <RowToggle aria-label="Collapse">
          <Triangle w={35} h={24} />
        </RowToggle>
        {filters.map((filter) => (
          <FilterField key={filter.label} {...filter} />
        ))}
      </FilterGrid>
      <Panel>
        <PanelTabs>
          <PanelTab $active>Quick Start</PanelTab>
          <PanelTab aria-label="Details" />
        </PanelTabs>
        <PanelSection $first>
          <SectionTitle>Contact From</SectionTitle>
          <FieldRow $columns="192px 1fr">
            <FieldCell>
              <FieldLabel htmlFor="code">Code</FieldLabel>
              <BoxWithIcon $inset="12px">
                <Picker id="code" />
                <Chevron w={14} h={9} stroke={2} color="#8fb0da" />
              </BoxWithIcon>
            </FieldCell>
            <Field id="contact" label="Contact" muted />
          </FieldRow>
        </PanelSection>
        <PanelSection>
          <SectionTitle>Regarding</SectionTitle>
          <FieldRow $columns="48px 240px 1fr">
            <EditMark aria-label="Edit project">
              <PencilIcon />
            </EditMark>
            <Field id="serial" label="Project Serial Num." />
            <Field id="proposal" label="Proposal" />
          </FieldRow>
          <FieldRow $indent>
            <Field id="subject-line" label="subject:" />
          </FieldRow>
          <FieldRow $indent>
            <FieldCell>
              <FieldLabel htmlFor="text">Text:</FieldLabel>
              <TextArea id="text" />
            </FieldCell>
          </FieldRow>
        </PanelSection>
        <PanelSection>
          <SectionTitle>Predefined Text</SectionTitle>
          <FieldRow $columns="192px 1fr">
            <Field id="number" label="Number" />
            <Field id="predefined-subject" label="Subject" muted />
          </FieldRow>
        </PanelSection>
      </Panel>
      <FormFooter>Eclectus, Inc. | Henry Patterson</FormFooter>
      <SaveDialog />
    </Frame>
  )
}

function App() {
  return (
    <Page>
      <GlobalStyle />
      <Browser>
        <TabStrip>
          <Lights>
            <Light $color="#ed6a5e" />
            <Light $color="#f4bf4f" />
            <Light $color="#61c554" />
          </Lights>
          <Tab>
            <Logo size={30} color="#5cb0cf" />
            <TabTitle>ECL CMIS</TabTitle>
            <button aria-label="Close tab">
              <MdClose size={28} />
            </button>
          </Tab>
          <StripButton aria-label="New tab">
            <MdAdd size={38} />
          </StripButton>
          <StripButton $end aria-label="Search tabs">
            <Chevron w={18} h={12} color="#ffffff" />
          </StripButton>
        </TabStrip>
        <Toolbar>
          <ToolButton aria-label="Back">
            <MdArrowBack size={40} />
          </ToolButton>
          <ToolButton aria-label="Forward" $color="#86878a">
            <MdArrowForward size={40} />
          </ToolButton>
          <ToolButton aria-label="Reload">
            <MdRefresh size={40} />
          </ToolButton>
          <Omnibox>
            <MdLock size={24} color="#9aa0a6" />
            <Url href="#">
              <span>ecl.cmis.app</span>/ECL_CMIS/
            </Url>
            <ToolButton aria-label="Share">
              <ShareIcon />
            </ToolButton>
            <ToolButton aria-label="Bookmark" $color="#bdc1c6">
              <MdStarBorder size={36} />
            </ToolButton>
          </Omnibox>
          <ToolButton aria-label="Extensions">
            <MdExtension size={34} />
          </ToolButton>
          <ToolButton aria-label="Side panel">
            <SidePanelIcon />
          </ToolButton>
          <ToolButton aria-label="Profile">
            <Avatar>H</Avatar>
          </ToolButton>
          <ToolButton aria-label="Menu">
            <MdMoreVert size={40} />
          </ToolButton>
        </Toolbar>
        <Bookmarks>
          <Bookmark href="#">
            <Folder />
            Favorites
          </Bookmark>
          <Bookmark href="#">
            <Folder />
            Bookmarks Menu
          </Bookmark>
        </Bookmarks>
        <Desktop>
          <Windows>
            <Navigation />
            <Cmis />
          </Windows>
          <SessionBar>
            <SessionButtons>
              <SessionButton>
                <GearOutline />
                Actions
              </SessionButton>
              <SessionButton>
                <TransferIcon />
                File Transfer
              </SessionButton>
              <SessionButton>
                <OptionsIcon />
                Options
              </SessionButton>
              <SessionButton>
                <PowerIcon size={30} stroke={4} bar={4} color="#111111" />
                Disconnect
              </SessionButton>
            </SessionButtons>
            <SessionHandle />
          </SessionBar>
        </Desktop>
        <Downloads>
          <DownloadItem>
            <WordFile />
            ECL WORD DO....docx
            <Chevron dir="up" w={18} h={12} color="#ffffff" />
          </DownloadItem>
          <DownloadActions>
            <ShowAll>Show All</ShowAll>
            <button aria-label="Close downloads">
              <Cross size={20} stroke={3} />
            </button>
          </DownloadActions>
        </Downloads>
      </Browser>
    </Page>
  )
}

export default App
